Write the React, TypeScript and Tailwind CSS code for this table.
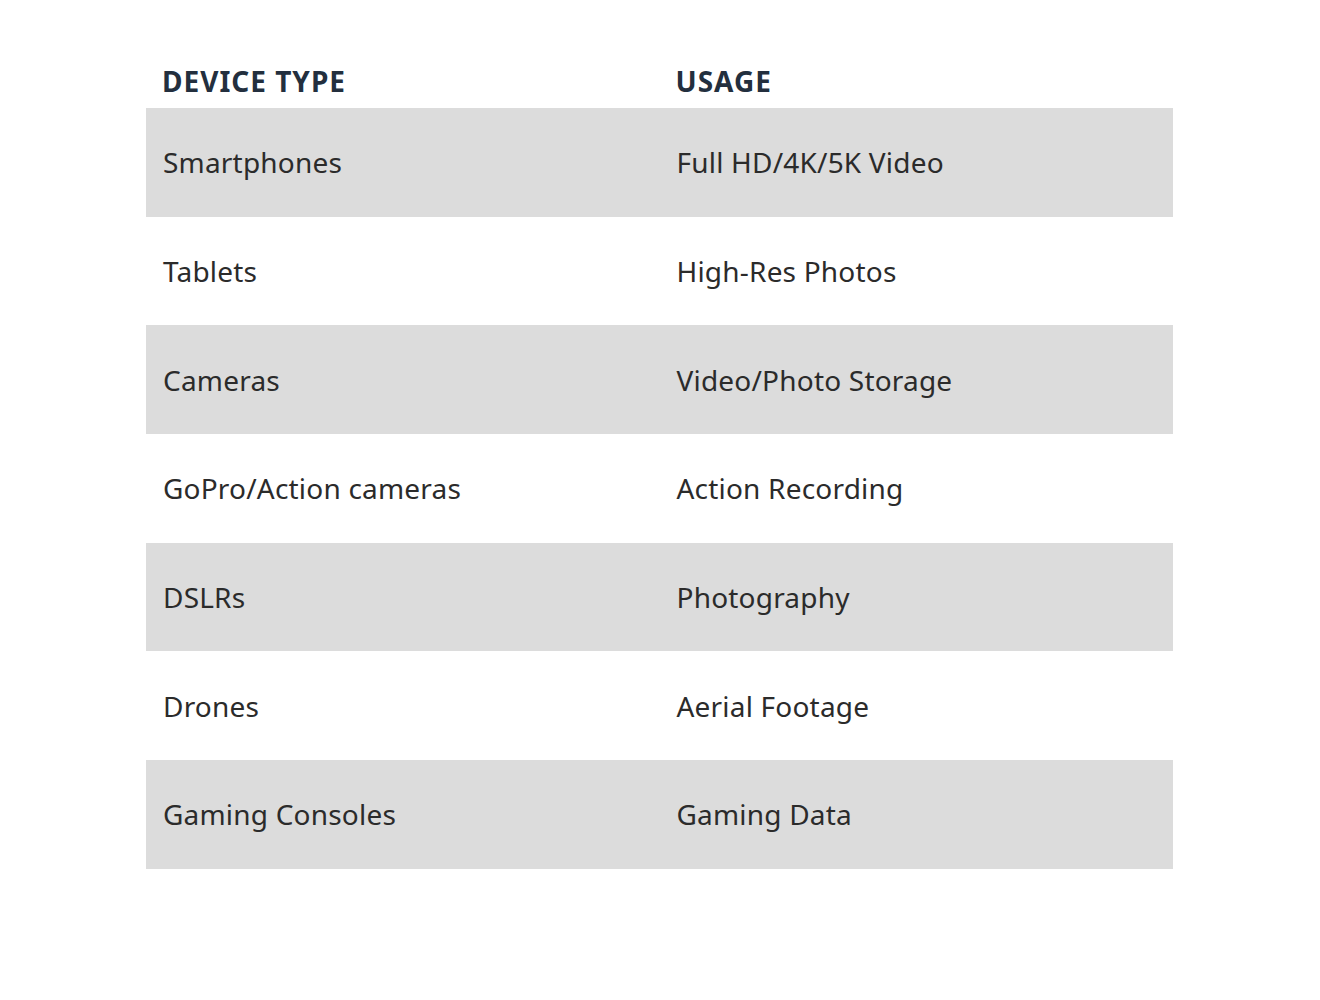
const rows = [
  { device: 'Smartphones', usage: 'Full HD/4K/5K Video' },
  { device: 'Tablets', usage: 'High-Res Photos' },
  { device: 'Cameras', usage: 'Video/Photo Storage' },
  { device: 'GoPro/Action cameras', usage: 'Action Recording' },
  { device: 'DSLRs', usage: 'Photography' },
  { device: 'Drones', usage: 'Aerial Footage' },
  { device: 'Gaming Consoles', usage: 'Gaming Data' },
];

export default function App() {
  return (
    <div className="min-h-screen bg-white pt-[54px] pl-[146px] font-['Noto_Sans',sans-serif]">
      <div className="w-[1027px]">
        {/* Header */}
        <div className="grid grid-cols-2 h-[54px] items-center text-[28px] font-bold tracking-[1px] text-[#232f3e]">
          <div className="pl-[16px]">DEVICE TYPE</div>
          <div className="pl-[16px]">USAGE</div>
        </div>

        {/* Rows */}
        {rows.map((row, i) => (
          <div
            key={row.device}
            className={`grid grid-cols-2 h-[108.7px] items-center text-[28px] tracking-[0.2px] text-[#2b2b2b] ${
              i % 2 === 0 ? 'bg-[#dcdcdc]' : 'bg-white'
            }`}
          >
            <div className="pl-[17px]">{row.device}</div>
            <div className="pl-[17px]">{row.usage}</div>
          </div>
        ))}
      </div>
    </div>
  );
}
